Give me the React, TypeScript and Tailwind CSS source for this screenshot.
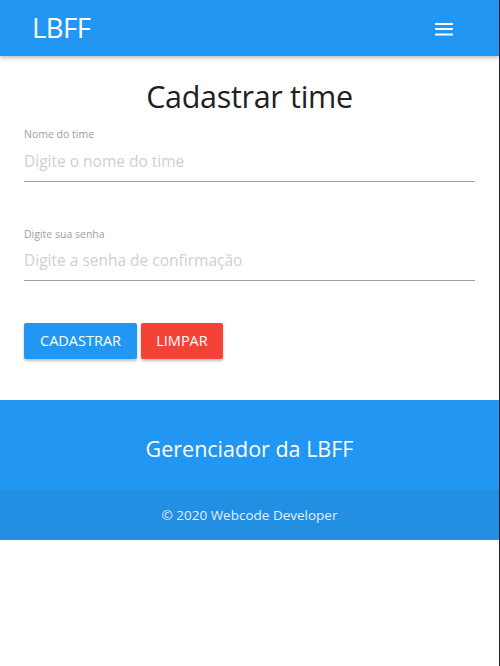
import React from "react";

function App() {
  return (
    <div
      className="min-h-[666px] w-full bg-white border-r border-[#23232b] flex flex-col"
      style={{ fontFamily: '"Open Sans", "Noto Sans", sans-serif' }}
    >
      {/* Navbar */}
      <nav className="h-14 bg-[#2196f3] text-white flex items-center justify-between pl-8 pr-[46px] shadow-[0_2px_4px_rgba(0,0,0,0.25)] relative z-10">
        <span className="text-[27.5px] leading-none tracking-[-0.5px]">LBFF</span>
        <svg width="18" height="14" viewBox="0 0 18 14" className="mt-px">
          <rect x="0" y="1" width="18" height="2" fill="white" />
          <rect x="0" y="6" width="18" height="2" fill="white" />
          <rect x="0" y="11.5" width="18" height="2" fill="white" />
        </svg>
      </nav>

      {/* Form */}
      <main className="px-6 pt-5 pb-[41px]">
        <h1 className="text-center text-[30.5px] leading-10 text-[#212121] tracking-[-0.3px]">
          Cadastrar time
        </h1>

        <div className="mt-[10px]">
          <label className="block text-[10.5px] leading-4 text-[#9e9e9e]">Nome do time</label>
          <input
            type="text"
            placeholder="Digite o nome do time"
            className="w-full h-[37px] text-[15.5px] border-b border-[#9e9e9e] outline-none placeholder:text-[#cfcfcf] pb-1 mt-[3px]"
          />
        </div>

        <div className="mt-[44px]">
          <label className="block text-[10.5px] leading-4 text-[#9e9e9e]">Digite sua senha</label>
          <input
            type="password"
            placeholder="Digite a senha de confirmação"
            className="w-full h-[37px] text-[15.5px] border-b border-[#9e9e9e] outline-none placeholder:text-[#cfcfcf] pb-1 mt-[2px]"
          />
        </div>

        <div className="flex gap-1 mt-[42px]">
          <button className="h-9 px-2 bg-[#2196f3] text-white text-[14.5px] rounded-[2px] shadow-[0_2px_3px_rgba(0,0,0,0.25)] w-[113px]">
            CADASTRAR
          </button>
          <button className="h-9 px-2 bg-[#f44336] text-white text-[14.5px] rounded-[2px] shadow-[0_2px_3px_rgba(0,0,0,0.25)] w-[82px]">
            LIMPAR
          </button>
        </div>
      </main>

      {/* Footer */}
      <footer className="bg-[#2196f3] text-white">
        <div className="h-[90px] flex items-center justify-center pt-[8px]">
          <h5 className="text-[21.5px]">Gerenciador da LBFF</h5>
        </div>
        <div className="h-[50px] bg-[#238fe2] flex items-center justify-center text-[13.5px] text-[#e3eefa]">
          © 2020 Webcode Developer
        </div>
      </footer>
    </div>
  );
}

export default App;
